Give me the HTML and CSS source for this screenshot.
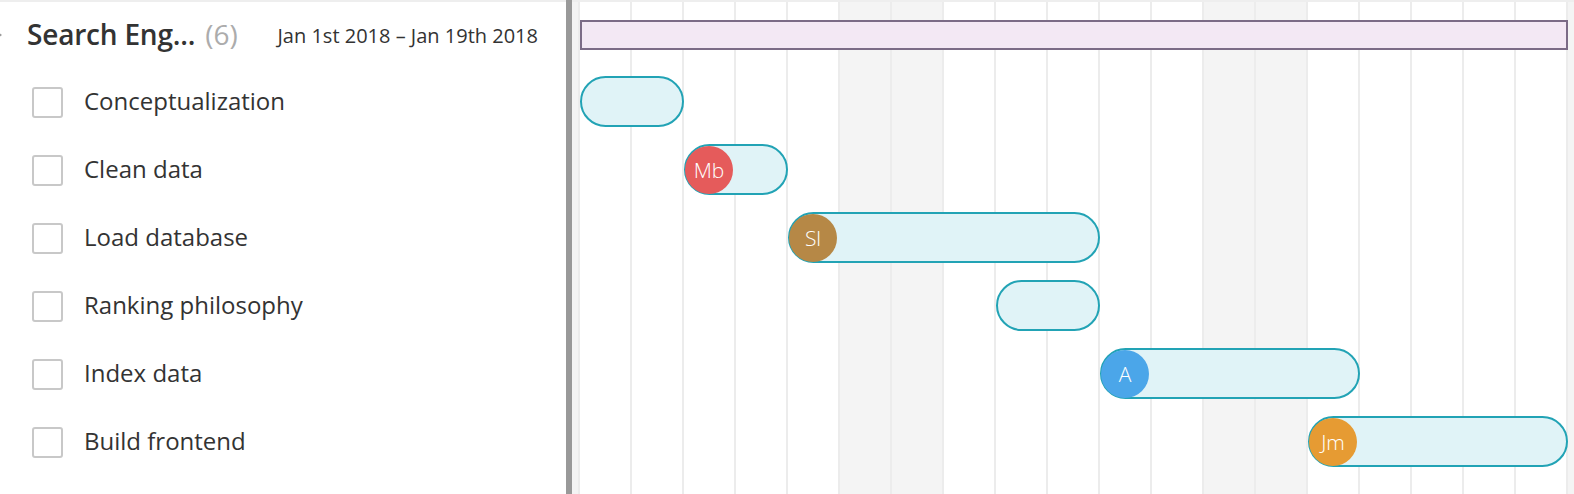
FILE: index.html
```html
<!DOCTYPE html>
<html>
<head>
<meta charset="utf-8">
<link rel="stylesheet" href="styles.css">
</head>
<body>
<div class="app">
  <div class="list">
    <div class="list-head">
      <span class="caret"></span>
      <span class="proj-name">Search Eng...</span>
      <span class="proj-count">(6)</span>
      <span class="proj-dates">Jan 1st 2018 – Jan 19th 2018</span>
    </div>
    <div class="task"><span class="check"></span><span class="task-name">Conceptualization</span></div>
    <div class="task"><span class="check"></span><span class="task-name">Clean data</span></div>
    <div class="task"><span class="check"></span><span class="task-name">Load database</span></div>
    <div class="task"><span class="check"></span><span class="task-name">Ranking philosophy</span></div>
    <div class="task"><span class="check"></span><span class="task-name">Index data</span></div>
    <div class="task"><span class="check"></span><span class="task-name">Build frontend</span></div>
  </div>
  <div class="divider"></div>
  <div class="chart">
    <div class="grid">
      <div class="day" style="grid-column:1"></div>
      <div class="day" style="grid-column:2"></div>
      <div class="day" style="grid-column:3"></div>
      <div class="day" style="grid-column:4"></div>
      <div class="day" style="grid-column:5"></div>
      <div class="day weekend" style="grid-column:6"></div>
      <div class="day weekend" style="grid-column:7"></div>
      <div class="day" style="grid-column:8"></div>
      <div class="day" style="grid-column:9"></div>
      <div class="day" style="grid-column:10"></div>
      <div class="day" style="grid-column:11"></div>
      <div class="day" style="grid-column:12"></div>
      <div class="day weekend" style="grid-column:13"></div>
      <div class="day weekend" style="grid-column:14"></div>
      <div class="day" style="grid-column:15"></div>
      <div class="day" style="grid-column:16"></div>
      <div class="day" style="grid-column:17"></div>
      <div class="day" style="grid-column:18"></div>
      <div class="day" style="grid-column:19"></div>

      <div class="summary" style="grid-row:1;grid-column:1 / span 19"></div>
      <div class="bar" style="grid-row:2;grid-column:1 / span 2"></div>
      <div class="bar" style="grid-row:3;grid-column:3 / span 2"><span class="avatar av-mb">Mb</span></div>
      <div class="bar" style="grid-row:4;grid-column:5 / span 6"><span class="avatar av-sl">Sl</span></div>
      <div class="bar" style="grid-row:5;grid-column:9 / span 2"></div>
      <div class="bar" style="grid-row:6;grid-column:11 / span 5"><span class="avatar av-a">A</span></div>
      <div class="bar" style="grid-row:7;grid-column:15 / span 5"><span class="avatar av-jm">Jm</span></div>
    </div>
  </div>
</div>
</body>
</html>
```
FILE: styles.css
```css
* { box-sizing: border-box; }
html, body { margin: 0; padding: 0; }
body {
  width: 1574px;
  height: 494px;
  overflow: hidden;
  background: #fff;
  font-family: "Open Sans", "Noto Sans", sans-serif;
  color: #333;
}
.app {
  display: flex;
  height: 494px;
}
.list {
  width: 566px;
  flex: none;
  border-top: 2px solid #eeeeee;
  overflow: hidden;
  display: flex;
  flex-direction: column;
}
.list-head {
  height: 66px;
  display: flex;
  align-items: center;
  padding-right: 28px;
  padding-bottom: 2px;
}
.caret {
  width: 0;
  height: 0;
  border-top: 3px solid transparent;
  border-bottom: 3px solid transparent;
  border-left: 4px solid #9a9a9a;
  margin-left: -2px;
  margin-right: 25px;
  margin-top: 2px;
}
.proj-name {
  font-size: 28px;
  font-weight: 600;
  color: #333;
  letter-spacing: -0.2px;
}
.proj-count {
  font-size: 28px;
  color: #acacac;
  margin-left: 10px;
}
.proj-dates {
  margin-left: auto;
  font-size: 20px;
  color: #333;
  margin-top: 2px;
}
.task {
  height: 68px;
  display: flex;
  align-items: center;
  padding-left: 32px;
}
.check {
  width: 31px;
  height: 31px;
  border: 2px solid #c8c8c8;
  border-radius: 3px;
  flex: none;
}
.task-name {
  margin-left: 21px;
  font-size: 24px;
  color: #333;
  margin-top: -3px;
}
.divider {
  width: 6px;
  flex: none;
  background: #999999;
}
.chart {
  flex: 1;
  background: #f4f4f4;
  border-top: 2px solid #eeeeee;
  padding-left: 6px;
}
.grid {
  display: grid;
  grid-template-columns: repeat(19, 52px);
  grid-template-rows: 66px repeat(6, 68px) 1fr;
  height: 100%;
  border-left: 2px solid #ececec;
  width: 990px;
}
.day {
  grid-row: 1 / -1;
  background: #fff;
  border-right: 2px solid #ececec;
}
.day.weekend {
  background: #f4f4f4;
}
.summary {
  margin-top: 18px;
  height: 30px;
  align-self: start;
  background: #f3e8f4;
  border: 2px solid #7b6b86;
}
.bar {
  align-self: start;
  margin-top: 8px;
  height: 51px;
  border: 2px solid #22a3b5;
  border-radius: 26px;
  background: #e0f3f7;
  display: flex;
  align-items: center;
}
.avatar {
  width: 48px;
  height: 48px;
  border-radius: 50%;
  margin-left: -1px;
  flex: none;
  display: flex;
  align-items: center;
  justify-content: center;
  color: #fff;
  font-size: 21px;
  font-weight: 300;
}
.av-mb { background: #e55b5b; }
.av-sl { background: #b68846; }
.av-a { background: #4ba6e9; }
.av-jm { background: #e69b33; }
```
